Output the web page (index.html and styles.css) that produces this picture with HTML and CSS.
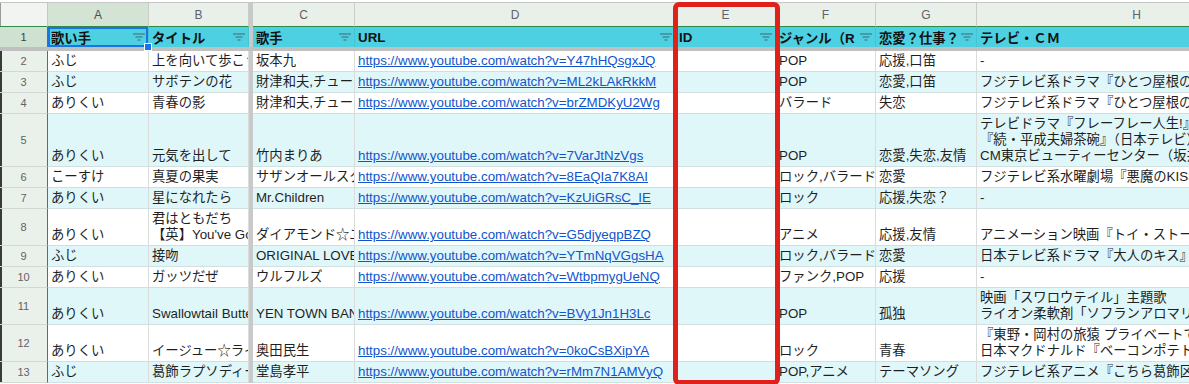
FILE: index.html
```html
<!DOCTYPE html>
<html lang="ja">
<head>
<meta charset="utf-8">
<title>Sheet</title>
<link rel="stylesheet" href="styles.css">
</head>
<body>
<div class="page">
  <div class="sheet">
    <div class="freeze-v"></div>
    <div class="freeze-h"></div>

    <div class="row">
      <div class="corner"></div>
      <div class="ch sel">A</div>
      <div class="ch">B</div>
      <div class="ch">C</div>
      <div class="ch">D</div>
      <div class="ch">E</div>
      <div class="ch">F</div>
      <div class="ch">G</div>
      <div class="ch">H</div>
    </div>

    <div class="row head">
      <div class="rn sel">1</div>
      <div class="hc active"><span class="ht">歌い手</span><svg class="fi" viewBox="0 0 12 8"><path d="M0 1h12M2.5 4h7M4.5 7h3"/></svg><span class="handle"></span></div>
      <div class="hc"><span class="ht">タイトル</span><svg class="fi" viewBox="0 0 12 8"><path d="M0 1h12M2.5 4h7M4.5 7h3"/></svg></div>
      <div class="hc"><span class="ht">歌手</span><svg class="fi" viewBox="0 0 12 8"><path d="M0 1h12M2.5 4h7M4.5 7h3"/></svg></div>
      <div class="hc"><span class="ht">URL</span><svg class="fi" viewBox="0 0 12 8"><path d="M0 1h12M2.5 4h7M4.5 7h3"/></svg></div>
      <div class="hc"><span class="ht">ID</span><svg class="fi" viewBox="0 0 12 8"><path d="M0 1h12M2.5 4h7M4.5 7h3"/></svg></div>
      <div class="hc"><span class="ht">ジャンル（R</span><svg class="fi" viewBox="0 0 12 8"><path d="M0 1h12M2.5 4h7M4.5 7h3"/></svg></div>
      <div class="hc"><span class="ht">恋愛？仕事？</span><svg class="fi" viewBox="0 0 12 8"><path d="M0 1h12M2.5 4h7M4.5 7h3"/></svg></div>
      <div class="hc last"><span class="ht">テレビ・ＣＭ</span><svg class="fi" viewBox="0 0 12 8"><path d="M0 1h12M2.5 4h7M4.5 7h3"/></svg></div>
    </div>

    <div class="row">
      <div class="rn">2</div>
      <div class="c">ふじ</div>
      <div class="c">上を向いて歩こう</div>
      <div class="c">坂本九</div>
      <div class="c"><a href="#">https://www.youtube.com/watch?v=Y47hHQsgxJQ</a></div>
      <div class="c"></div>
      <div class="c">POP</div>
      <div class="c">応援,口笛</div>
      <div class="c">-</div>
    </div>

    <div class="row band">
      <div class="rn">3</div>
      <div class="c">ふじ</div>
      <div class="c">サボテンの花</div>
      <div class="c">財津和夫,チューリップ</div>
      <div class="c"><a href="#">https://www.youtube.com/watch?v=ML2kLAkRkkM</a></div>
      <div class="c"></div>
      <div class="c">POP</div>
      <div class="c">恋愛,口笛</div>
      <div class="c">フジテレビ系ドラマ『ひとつ屋根の下』</div>
    </div>

    <div class="row">
      <div class="rn">4</div>
      <div class="c">ありくい</div>
      <div class="c">青春の影</div>
      <div class="c">財津和夫,チューリップ</div>
      <div class="c"><a href="#">https://www.youtube.com/watch?v=brZMDKyU2Wg</a></div>
      <div class="c"></div>
      <div class="c">バラード</div>
      <div class="c">失恋</div>
      <div class="c">フジテレビ系ドラマ『ひとつ屋根の下』</div>
    </div>

    <div class="row band">
      <div class="rn">5</div>
      <div class="c">ありくい</div>
      <div class="c">元気を出して</div>
      <div class="c">竹内まりあ</div>
      <div class="c"><a href="#">https://www.youtube.com/watch?v=7VarJtNzVgs</a></div>
      <div class="c"></div>
      <div class="c">POP</div>
      <div class="c">恋愛,失恋,友情</div>
      <div class="c"><span>テレビドラマ『フレーフレー人生!』<br>『続・平成夫婦茶碗』（日本テレビ）<br>CM東京ビューティーセンター（坂井）</span></div>
    </div>

    <div class="row">
      <div class="rn">6</div>
      <div class="c">こーすけ</div>
      <div class="c">真夏の果実</div>
      <div class="c">サザンオールスターズ</div>
      <div class="c"><a href="#">https://www.youtube.com/watch?v=8EaQIa7K8AI</a></div>
      <div class="c"></div>
      <div class="c">ロック,バラード</div>
      <div class="c">恋愛</div>
      <div class="c">フジテレビ系水曜劇場『悪魔のKISS』</div>
    </div>

    <div class="row band">
      <div class="rn">7</div>
      <div class="c">ありくい</div>
      <div class="c">星になれたら</div>
      <div class="c">Mr.Children</div>
      <div class="c"><a href="#">https://www.youtube.com/watch?v=KzUiGRsC_IE</a></div>
      <div class="c"></div>
      <div class="c">ロック</div>
      <div class="c">応援,失恋？</div>
      <div class="c">-</div>
    </div>

    <div class="row">
      <div class="rn">8</div>
      <div class="c">ありくい</div>
      <div class="c"><span>君はともだち<br>【英】You've Got a Friend in Me</span></div>
      <div class="c">ダイアモンド☆ユカイ</div>
      <div class="c"><a href="#">https://www.youtube.com/watch?v=G5djyeqpBZQ</a></div>
      <div class="c"></div>
      <div class="c">アニメ</div>
      <div class="c">応援,友情</div>
      <div class="c">アニメーション映画『トイ・ストーリー』</div>
    </div>

    <div class="row band">
      <div class="rn">9</div>
      <div class="c">ふじ</div>
      <div class="c">接吻</div>
      <div class="c">ORIGINAL LOVE</div>
      <div class="c"><a href="#">https://www.youtube.com/watch?v=YTmNqVGgsHA</a></div>
      <div class="c"></div>
      <div class="c">ロック,バラード</div>
      <div class="c">恋愛</div>
      <div class="c">日本テレビ系ドラマ『大人のキス』</div>
    </div>

    <div class="row">
      <div class="rn">10</div>
      <div class="c">ありくい</div>
      <div class="c">ガッツだぜ</div>
      <div class="c">ウルフルズ</div>
      <div class="c"><a href="#">https://www.youtube.com/watch?v=WtbpmygUeNQ</a></div>
      <div class="c"></div>
      <div class="c">ファンク,POP</div>
      <div class="c">応援</div>
      <div class="c">-</div>
    </div>

    <div class="row band">
      <div class="rn">11</div>
      <div class="c">ありくい</div>
      <div class="c">Swallowtail Butterfly 〜あいのうた〜</div>
      <div class="c">YEN TOWN BAND</div>
      <div class="c"><a href="#">https://www.youtube.com/watch?v=BVy1Jn1H3Lc</a></div>
      <div class="c"></div>
      <div class="c">POP</div>
      <div class="c">孤独</div>
      <div class="c"><span>映画「スワロウテイル」主題歌<br>ライオン柔軟剤「ソフランアロマリッチ」</span></div>
    </div>

    <div class="row">
      <div class="rn">12</div>
      <div class="c">ありくい</div>
      <div class="c">イージュー☆ライダー</div>
      <div class="c">奥田民生</div>
      <div class="c"><a href="#">https://www.youtube.com/watch?v=0koCsBXipYA</a></div>
      <div class="c"></div>
      <div class="c">ロック</div>
      <div class="c">青春</div>
      <div class="c"><span>『東野・岡村の旅猿 プライベートでごめんなさい…』<br>日本マクドナルド『ベーコンポテトパイ』</span></div>
    </div>

    <div class="row band">
      <div class="rn">13</div>
      <div class="c">ふじ</div>
      <div class="c">葛飾ラプソディー</div>
      <div class="c">堂島孝平</div>
      <div class="c"><a href="#">https://www.youtube.com/watch?v=rMm7N1AMVyQ</a></div>
      <div class="c"></div>
      <div class="c">POP,アニメ</div>
      <div class="c">テーマソング</div>
      <div class="c">フジテレビ系アニメ『こちら葛飾区亀有公園前派出所』</div>
    </div>

    <div class="callout"></div>
  </div>
</div>
</body>
</html>
```

FILE: styles.css
```css
html, body {
  margin: 0;
  padding: 0;
  overflow: hidden;
  background: #ffffff;
}

.page {
  padding-top: 2px;
  width: 1189px;
  height: 384px;
  overflow: hidden;
  box-sizing: border-box;
}

.sheet {
  position: relative;
  display: grid;
  grid-template-columns: 48px 101px 100px 4px 102px 321px 100px 100px 101px 320px;
  grid-template-rows: 24px 20px 4px 21px 21px 21px 53px 21px 21px 37px 21px 21px 37px 37px 21px;
  width: max-content;
  border-top: 1px solid #c4c7c5;
  font-family: "Liberation Sans", "Noto Sans CJK JP", sans-serif;
  font-size: 13.33px;
  color: #1f1f1f;
}

.row {
  display: contents;
}

.freeze-v {
  grid-column: 4;
  grid-row: 1 / -1;
  background: #c8c9c9;
}

.freeze-h {
  grid-column: 1 / -1;
  grid-row: 3;
  background: #bfc1c1;
}

/* column letters */
.corner {
  background: #f1f4f1;
  border-right: 1px solid #c4c9c4;
  border-bottom: 1px solid #2f8a46;
  box-shadow: inset 1px 0 #9a9a9a;
}

.ch {
  display: flex;
  align-items: center;
  justify-content: center;
  background: #e8f0e9;
  border-right: 1px solid #c7cec8;
  border-bottom: 1px solid #2f8a46;
  color: #5f6368;
  font-size: 12px;
  box-sizing: border-box;
}

.ch.sel {
  background: #d3e3d4;
  color: #4a4f53;
}

/* row numbers */
.rn {
  display: flex;
  align-items: center;
  justify-content: center;
  background: #eaf1eb;
  border-right: 1px solid #2f8a46;
  border-bottom: 1px solid #d2d9d3;
  color: #5f6368;
  font-size: 11px;
  box-shadow: inset 2px 0 #3a3a3a;
}

.rn.sel {
  background: #cfe1d1;
  color: #3c4043;
  border-bottom: none;
  box-shadow: none;
}

/* header row (row 1) */
.hc {
  position: relative;
  display: flex;
  align-items: center;
  gap: 2px;
  padding: 0 3px 0 3px;
  background: #4dd0e1;
  border-right: 1px solid #47c4d4;
  font-weight: bold;
  color: #111;
  min-width: 0;
}

.hc.active {
  box-shadow: inset 0 0 0 2px #1a73e8;
}

.ht {
  flex: 1;
  min-width: 0;
  overflow: hidden;
  white-space: nowrap;
}

.fi {
  flex: none;
  width: 12px;
  height: 8px;
  fill: none;
  stroke: #3e6a72;
  stroke-width: 1.1;
}

.handle {
  position: absolute;
  right: -4px;
  bottom: -4px;
  width: 6px;
  height: 6px;
  background: #1a73e8;
  border: 1px solid #ffffff;
  z-index: 2;
}

/* data cells */
.c {
  display: flex;
  align-items: flex-end;
  padding: 0 3px 2px 3px;
  line-height: 16px;
  white-space: nowrap;
  overflow: hidden;
  background: #ffffff;
  border-right: 1px solid #dadcdc;
  border-bottom: 1px solid #dadcdc;
  min-width: 0;
}

.band > .c {
  background: #e0f7fa;
  border-bottom-color: #d2e0e2;
}

.c a {
  color: #1155cc;
  text-decoration: underline;
}

/* red annotation box */
.callout {
  position: absolute;
  left: 673px;
  top: -1px;
  width: 107px;
  height: 383px;
  box-sizing: border-box;
  border: 5px solid #e0211b;
  border-radius: 6px;
  z-index: 3;
  pointer-events: none;
}
```
